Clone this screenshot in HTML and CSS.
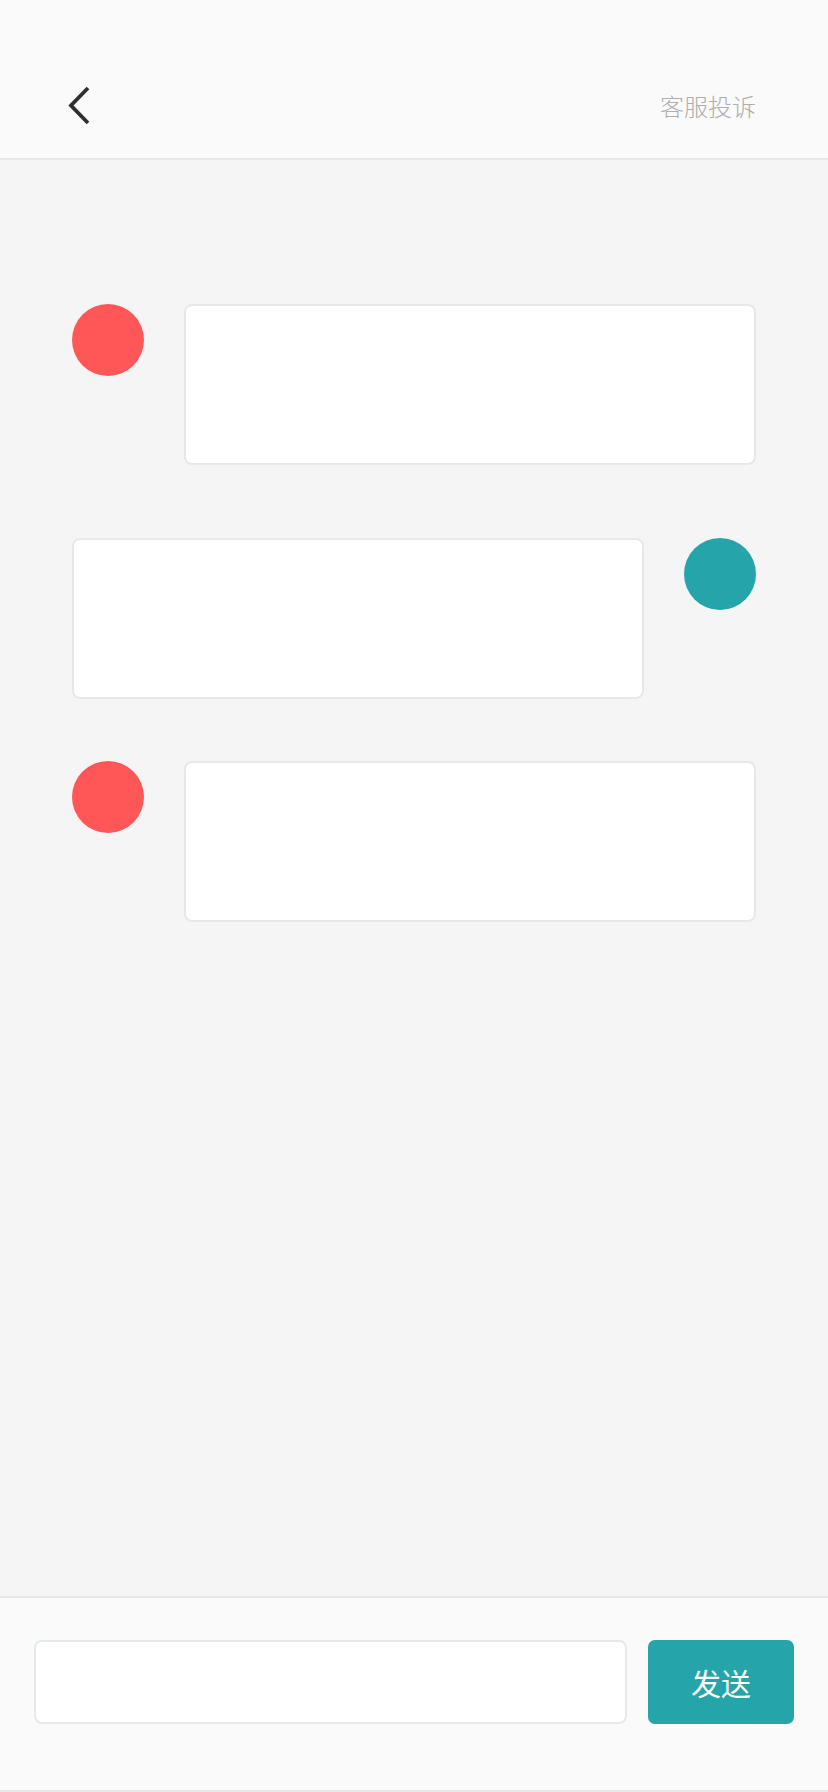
FILE: index.html
```html
<!DOCTYPE html>
<html lang="zh-CN">
<head>
<meta charset="utf-8">
<title>客服</title>
<link rel="stylesheet" href="styles.css">
</head>
<body>
<div class="page">
  <header class="topbar">
    <button class="back" aria-label="返回">
      <svg width="26" height="40" viewBox="0 0 26 40">
        <polyline points="21,3 4,20.5 21,38" fill="none" stroke="#2f2f2f" stroke-width="3.8" stroke-linejoin="miter"/>
      </svg>
    </button>
    <span class="title-link">客服投诉</span>
  </header>
  <main class="chat">
    <div class="msg msg-in first">
      <div class="avatar avatar-red"></div>
      <div class="bubble"></div>
    </div>
    <div class="msg msg-out second">
      <div class="bubble"></div>
      <div class="avatar avatar-teal"></div>
    </div>
    <div class="msg msg-in third">
      <div class="avatar avatar-red"></div>
      <div class="bubble"></div>
    </div>
  </main>
  <footer class="composer">
    <div class="input"></div>
    <button class="send">发送</button>
  </footer>
</div>
</body>
</html>
```

FILE: styles.css
```css
html, body {
  margin: 0;
  padding: 0;
}
body {
  font-family: "Noto Sans CJK SC", "Noto Sans", sans-serif;
  background: #f4f4f4;
}
.page {
  width: 828px;
  height: 1792px;
  display: flex;
  flex-direction: column;
}
.topbar {
  height: 106px;
  padding: 52px 72px 0 67px;
  background: #fafafa;
  border-bottom: 2px solid #e5e9e9;
  display: flex;
  align-items: center;
  justify-content: space-between;
  flex-shrink: 0;
}
.back {
  border: 0;
  background: none;
  padding: 0;
  margin: 0;
  width: 26px;
  height: 40px;
  display: flex;
}
.title-link {
  font-size: 24px;
  color: #aeaeae;
  font-weight: 300;
  line-height: 24px;
  padding-top: 2px;
}
.chat {
  flex: 1;
  background: #f5f5f5;
  padding: 144px 72px 0 72px;
  display: flex;
  flex-direction: column;
}
.msg {
  display: flex;
  justify-content: space-between;
  align-items: flex-start;
}
.second { margin-top: 73px; }
.third { margin-top: 62px; }
.avatar {
  width: 72px;
  height: 72px;
  border-radius: 50%;
  flex-shrink: 0;
}
.avatar-red { background: #ff5757; }
.avatar-teal { background: #25a4a9; }
.bubble {
  width: 568px;
  height: 157px;
  background: #ffffff;
  border: 2px solid #e5e9e9;
  border-radius: 8px;
}
.composer {
  flex-shrink: 0;
  background: #fafafa;
  border-top: 2px solid #e5e9e9;
  border-bottom: 2px solid #e5e9e9;
  padding: 42px 34px 0 34px;
  box-sizing: border-box;
  height: 196px;
  display: flex;
  align-items: flex-start;
  gap: 21px;
}
.input {
  width: 589px;
  height: 80px;
  background: #fff;
  border: 2px solid #e5e9e9;
  border-radius: 8px;
}
.send {
  width: 146px;
  height: 84px;
  border: 0;
  border-radius: 7px;
  background: #25a4a9;
  color: #fff;
  font-family: "Noto Sans CJK SC", "Noto Sans", sans-serif;
  font-size: 30px;
  padding: 0;
}
```
